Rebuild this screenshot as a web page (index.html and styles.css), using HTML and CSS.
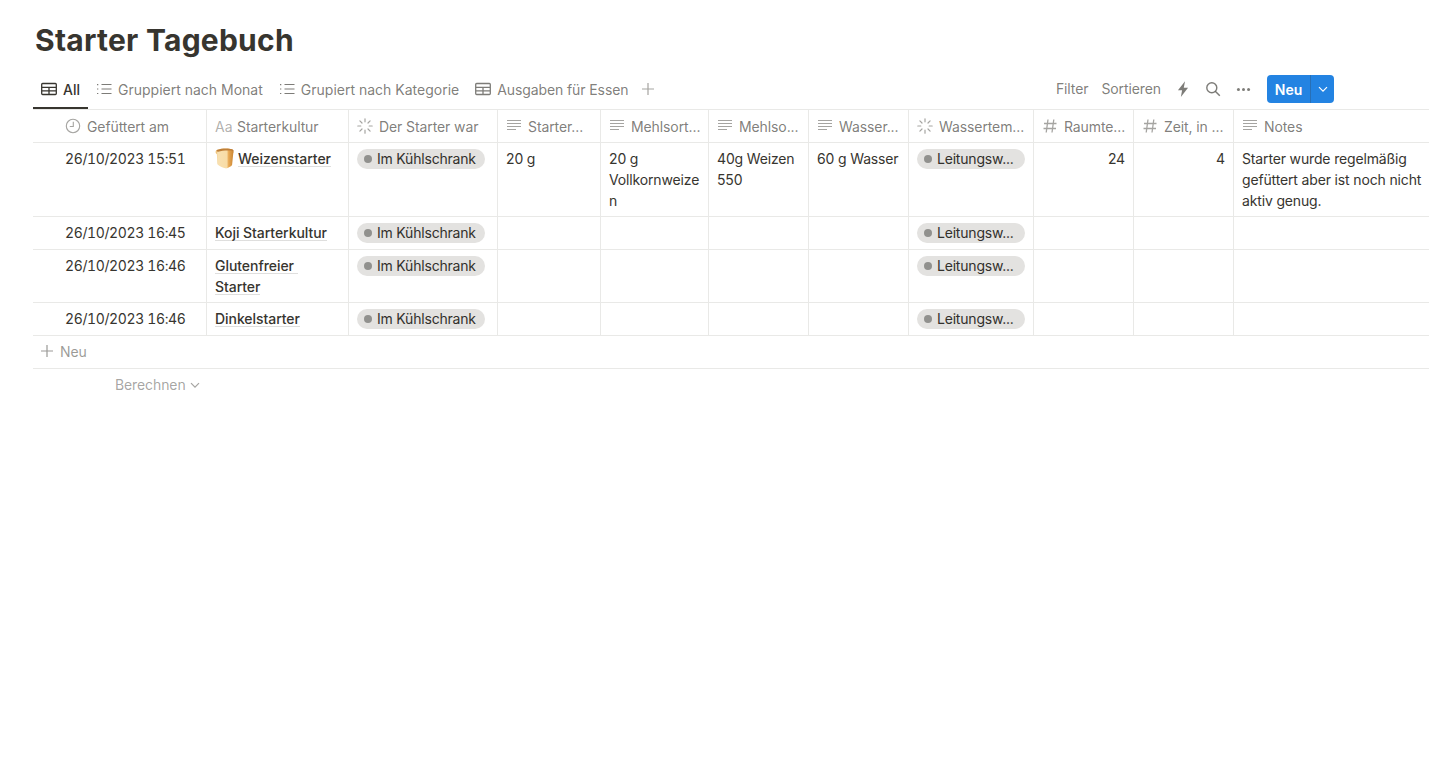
FILE: index.html
```html
<!DOCTYPE html>
<html lang="de">
<head>
<meta charset="utf-8">
<title>Starter Tagebuch</title>
<link rel="stylesheet" href="styles.css">
</head>
<body>
<svg class="defs" width="0" height="0" aria-hidden="true">
  <symbol id="i-table" viewBox="0 0 16 16"><path d="M1.600 2.500h12.800a.9.9 0 0 1 .9.9v9.200a.9.9 0 0 1-.9.9H1.600a.9.9 0 0 1-.9-.9V3.400a.9.9 0 0 1 .9-.9zM.9 6.300h14.200M.9 9.800h14.200M8 6.300v7.200" fill="none" stroke="currentColor" stroke-width="1.300"/></symbol>
  <symbol id="i-list" viewBox="0 0 16 16"><path d="M5.500 3.500h10M5.500 8h10M5.500 12.500h10" fill="none" stroke="currentColor" stroke-width="1"/><path d="M1 3h1.300v1.200H1zM1 7.400h1.300v1.200H1zM1 11.900h1.300v1.200H1z" fill="currentColor"/></symbol>
  <symbol id="i-text" viewBox="0 0 16 16"><path d="M1 2.500h14M1 5.500h14M1 8.500h14M1 11.500h9" fill="none" stroke="currentColor" stroke-width="1.100"/></symbol>
  <symbol id="i-status" viewBox="0 0 16 16"><path d="M8 .8v3M8 12.200v3M.8 8h3M12.200 8h3M2.900 2.900l2.100 2.100M11 11l2.100 2.100M2.900 13.100 5 11M11 5l2.100-2.100" fill="none" stroke="currentColor" stroke-width="1.200" stroke-linecap="round"/></symbol>
  <symbol id="i-hash" viewBox="0 0 16 16"><path d="M6 1.500 4.200 14.500M11.800 1.500 10 14.500M2 5.500h12.500M1.500 10.500H14" fill="none" stroke="currentColor" stroke-width="1.300"/></symbol>
  <symbol id="i-clock" viewBox="0 0 16 16"><circle cx="8" cy="8" r="6.700" fill="none" stroke="currentColor" stroke-width="1.100"/><path d="M8.300 3.800v4.700H4.800" fill="none" stroke="currentColor" stroke-width="1.100"/></symbol>
  <symbol id="i-plus" viewBox="0 0 16 16"><path d="M8 2v12M2 8h12" fill="none" stroke="currentColor" stroke-width="1.200"/></symbol>
  <symbol id="i-chev" viewBox="0 0 12 12"><path d="M2 4.200 6 8.200l4-4" fill="none" stroke="currentColor" stroke-width="1.200"/></symbol>
</svg>
<main class="page">
  <h1 class="title">Starter Tagebuch</h1>
  <div class="toolbar">
    <nav class="tabs">
      <a class="tab tab-active"><svg class="tab-icon"><use href="#i-table"/></svg>All</a>
      <a class="tab"><svg class="tab-icon"><use href="#i-list"/></svg>Gruppiert nach Monat</a>
      <a class="tab"><svg class="tab-icon"><use href="#i-list"/></svg>Grupiert nach Kategorie</a>
      <a class="tab tab-tight"><svg class="tab-icon"><use href="#i-table"/></svg>Ausgaben für Essen</a>
      <svg class="add-view"><use href="#i-plus"/></svg>
    </nav>
    <div class="actions">
      <span class="action">Filter</span>
      <span class="action">Sortieren</span>
      <svg class="bolt" viewBox="0 0 16 16"><path d="M9.800 1 3.500 9h3.700l-1.100 6 6.400-8.200H8.700z" fill="currentColor"/></svg>
      <svg class="search" viewBox="0 0 16 16"><circle cx="6.800" cy="6.800" r="5" fill="none" stroke="currentColor" stroke-width="1.400"/><path d="m10.500 10.500 4.300 4.300" stroke="currentColor" stroke-width="1.500" fill="none"/></svg>
      <svg class="dots" viewBox="0 0 16 16"><circle cx="2.600" cy="8" r="1.600" fill="currentColor"/><circle cx="8" cy="8" r="1.600" fill="currentColor"/><circle cx="13.400" cy="8" r="1.600" fill="currentColor"/></svg>
      <div class="new-btn"><span class="new-label">Neu</span><span class="new-arrow"><svg class="new-chev"><use href="#i-chev"/></svg></span></div>
    </div>
  </div>
  <div class="table">
    <div class="row head">
      <div class="cell first"><svg class="h-icon"><use href="#i-clock"/></svg><span>Gefüttert am</span></div>
      <div class="cell"><span class="aa">Aa</span><span>Starterkultur</span></div>
      <div class="cell"><svg class="h-icon"><use href="#i-status"/></svg><span>Der Starter war</span></div>
      <div class="cell"><svg class="h-icon"><use href="#i-text"/></svg><span>Starter...</span></div>
      <div class="cell"><svg class="h-icon"><use href="#i-text"/></svg><span>Mehlsort...</span></div>
      <div class="cell"><svg class="h-icon"><use href="#i-text"/></svg><span>Mehlso...</span></div>
      <div class="cell"><svg class="h-icon"><use href="#i-text"/></svg><span>Wasser...</span></div>
      <div class="cell"><svg class="h-icon"><use href="#i-status"/></svg><span>Wassertem...</span></div>
      <div class="cell"><svg class="h-icon"><use href="#i-hash"/></svg><span>Raumte...</span></div>
      <div class="cell"><svg class="h-icon"><use href="#i-hash"/></svg><span>Zeit, in ...</span></div>
      <div class="cell last"><svg class="h-icon"><use href="#i-text"/></svg><span>Notes</span></div>
    </div>
    <div class="row r-tall">
      <div class="cell first date">26/10/2023 15:51</div>
      <div class="cell"><svg class="bread" viewBox="0 0 20 22"><defs><linearGradient id="crust" x1="0" x2="1" y1="0" y2="0"><stop offset="0" stop-color="#e9b564"/><stop offset=".12" stop-color="#f8e0b0"/><stop offset=".62" stop-color="#f8dca6"/><stop offset=".72" stop-color="#e8a955"/><stop offset="1" stop-color="#c98532"/></linearGradient></defs><path d="M2.500 1.800C7 .2 14 .2 17.800 1.300c2 .6 2.200 3 1.400 4.500L18 17.600c-.1.900-1.200 1.500-2.800 2.400-1.500.9-3 1.700-4.400 1.300C8.500 20.700 5 19 3.400 17.800c-.7-.5-1-1-1-1.800L2 6.500C.2 5.300.2 2.600 2.500 1.800z" fill="url(#crust)"/><path d="M2.500 1.800C7 .2 14 .2 17.800 1.300c1.100.3 1.700 1 1.800 1.900C14.500 2.300 8 2.600 3.300 3.900 1.700 3.600 1.100 2.400 2.500 1.800z" fill="#bf7f38"/></svg><span class="name">Weizenstarter</span></div>
      <div class="cell"><span class="pill"><i class="dot"></i>Im Kühlschrank</span></div>
      <div class="cell">20 g</div>
      <div class="cell break">20 g Vollkornweizen</div>
      <div class="cell">40g Weizen 550</div>
      <div class="cell">60 g Wasser</div>
      <div class="cell"><span class="pill pill-fill"><i class="dot"></i><span class="pill-text">Leitungsw...</span></span></div>
      <div class="cell num">24</div>
      <div class="cell num">4</div>
      <div class="cell last">Starter wurde regelmäßig gefüttert aber ist noch nicht aktiv genug.</div>
    </div>
    <div class="row">
      <div class="cell first date">26/10/2023 16:45</div>
      <div class="cell"><span class="name">Koji Starterkultur</span></div>
      <div class="cell"><span class="pill"><i class="dot"></i>Im Kühlschrank</span></div>
      <div class="cell"></div><div class="cell"></div><div class="cell"></div><div class="cell"></div>
      <div class="cell"><span class="pill pill-fill"><i class="dot"></i><span class="pill-text">Leitungsw...</span></span></div>
      <div class="cell"></div><div class="cell"></div><div class="cell last"></div>
    </div>
    <div class="row">
      <div class="cell first date">26/10/2023 16:46</div>
      <div class="cell"><span class="name">Glutenfreier&nbsp; Starter</span></div>
      <div class="cell"><span class="pill"><i class="dot"></i>Im Kühlschrank</span></div>
      <div class="cell"></div><div class="cell"></div><div class="cell"></div><div class="cell"></div>
      <div class="cell"><span class="pill pill-fill"><i class="dot"></i><span class="pill-text">Leitungsw...</span></span></div>
      <div class="cell"></div><div class="cell"></div><div class="cell last"></div>
    </div>
    <div class="row">
      <div class="cell first date">26/10/2023 16:46</div>
      <div class="cell"><span class="name">Dinkelstarter</span></div>
      <div class="cell"><span class="pill"><i class="dot"></i>Im Kühlschrank</span></div>
      <div class="cell"></div><div class="cell"></div><div class="cell"></div><div class="cell"></div>
      <div class="cell"><span class="pill pill-fill"><i class="dot"></i><span class="pill-text">Leitungsw...</span></span></div>
      <div class="cell"></div><div class="cell"></div><div class="cell last"></div>
    </div>
    <div class="add-row"><svg class="add-icon"><use href="#i-plus"/></svg>Neu</div>
    <div class="calc">Berechnen<svg class="calc-chev"><use href="#i-chev"/></svg></div>
  </div>
</main>
</body>
</html>
```

FILE: styles.css
```css
* { box-sizing: border-box; }
html, body { margin: 0; height: 100%; background: #fff; overflow: hidden; }
body {
  font-family: Inter, "Liberation Sans", sans-serif;
  font-size: 14px;
  line-height: 21px;
  color: #37352f;
}
.defs { position: absolute; }
.page { padding-left: 33px; }
.title {
  margin: 0;
  padding: 22px 0 0 2px;
  height: 75px;
  font-size: 30px;
  line-height: 36px;
  font-weight: 700;
  letter-spacing: 0.25px;
  color: #37352f;
}
.toolbar {
  display: flex;
  justify-content: space-between;
  height: 34px;
  margin-right: 95px;
}
.tabs { display: flex; align-items: flex-start; height: 34px; }
.tab {
  display: flex;
  align-items: center;
  height: 34px;
  padding: 0 8px 6px 8px;
  color: rgba(55, 53, 47, 0.65);
  white-space: nowrap;
}
.tab-active {
  color: #37352f;
  font-weight: 500;
  border-bottom: 2px solid #37352f;
  padding-bottom: 4px;
  width: 55px;
}
.tab-tight { letter-spacing: -0.1px; }
.tab-icon { width: 16px; height: 16px; margin-right: 6px; flex: none; }
.add-view { width: 16px; height: 16px; margin: 6px 0 0 4px; color: rgba(55, 53, 47, 0.45); }
.actions { display: flex; align-items: flex-start; }
.action { color: rgba(55, 53, 47, 0.65); margin: 3px 13px 0 0; letter-spacing: -0.1px; }
.bolt, .search, .dots { color: rgba(55, 53, 47, 0.65); flex: none; }
.bolt { width: 18px; height: 18px; margin: 5px 0 0 0; }
.search { width: 16px; height: 16px; margin: 6px 0 0 13px; }
.dots { width: 15px; height: 15px; margin: 7px 16px 0 15px; }
.new-btn {
  display: flex;
  width: 67px;
  height: 28px;
  background: #2383e2;
  color: #fff;
  border-radius: 4px;
  font-weight: 600;
}
.new-label { width: 44px; text-align: center; line-height: 30px; border-right: 1px solid rgba(55, 53, 47, 0.25); }
.new-arrow { flex: 1; display: flex; align-items: center; justify-content: center; }
.new-chev { width: 12px; height: 12px; }
.table { border-top: 1px solid #e9e9e7; }
.row {
  display: grid;
  grid-template-columns: 174px 142px 149px 103px 108px 100px 100px 125px 100px 100px 196px;
  border-bottom: 1px solid #e9e9e7;
  min-height: 33px;
}
.r-tall { min-height: 74px; }
.cell {
  border-right: 1px solid #e9e9e7;
  padding: 5px 8px;
  min-width: 0;
  letter-spacing: -0.15px;
}
.cell.first { padding-left: 32px; }
.cell.last { border-right: 0; padding-right: 0; }
.date { font-variant-numeric: tabular-nums; letter-spacing: -0.38px; }
.break { overflow-wrap: anywhere; }
.num { text-align: right; }
.head .cell {
  display: flex;
  align-items: center;
  padding-top: 5px;
  padding-bottom: 5px;
  color: rgba(55, 53, 47, 0.65);
  white-space: nowrap;
  overflow: hidden;
  letter-spacing: -0.1px;
}
.h-icon { width: 16px; height: 16px; margin-right: 6px; flex: none; color: rgba(55, 53, 47, 0.45); }
.aa { width: 16px; margin-right: 6px; font-size: 14px; letter-spacing: 0; color: rgba(55, 53, 47, 0.4); }
.name {
  font-weight: 500;
  letter-spacing: -0.05px;
  background-image: linear-gradient(rgba(55, 53, 47, 0.16), rgba(55, 53, 47, 0.16));
  background-repeat: repeat-x;
  background-size: 100% 1px;
  background-position: 0 100%;
}
.bread { width: 19px; height: 21px; vertical-align: -5px; margin-right: 4px; }
.pill {
  display: inline-flex;
  align-items: center;
  height: 20px;
  margin-top: 1px;
  padding: 0 9px 1px 7px;
  background: #e3e2e0;
  border-radius: 10px;
  white-space: nowrap;
  color: #32302c;
  letter-spacing: -0.2px;
  vertical-align: top;
}
.pill-fill { display: flex; width: 108px; }
.pill-text { overflow: hidden; }
.dot { width: 8px; height: 8px; border-radius: 50%; background: #91918e; margin-right: 5px; flex: none; }
.add-row {
  display: flex;
  align-items: center;
  height: 33px;
  padding: 0 0 2px 6px;
  color: rgba(55, 53, 47, 0.5);
  letter-spacing: -0.1px;
  border-bottom: 1px solid #e9e9e7;
}
.add-icon { width: 16px; height: 16px; margin-right: 5px; }
.calc {
  display: flex;
  align-items: center;
  height: 33px;
  padding: 0 0 2px 82px;
  letter-spacing: -0.1px;
  color: rgba(55, 53, 47, 0.45);
}
.calc-chev { width: 12px; height: 12px; margin-left: 3px; }
```
